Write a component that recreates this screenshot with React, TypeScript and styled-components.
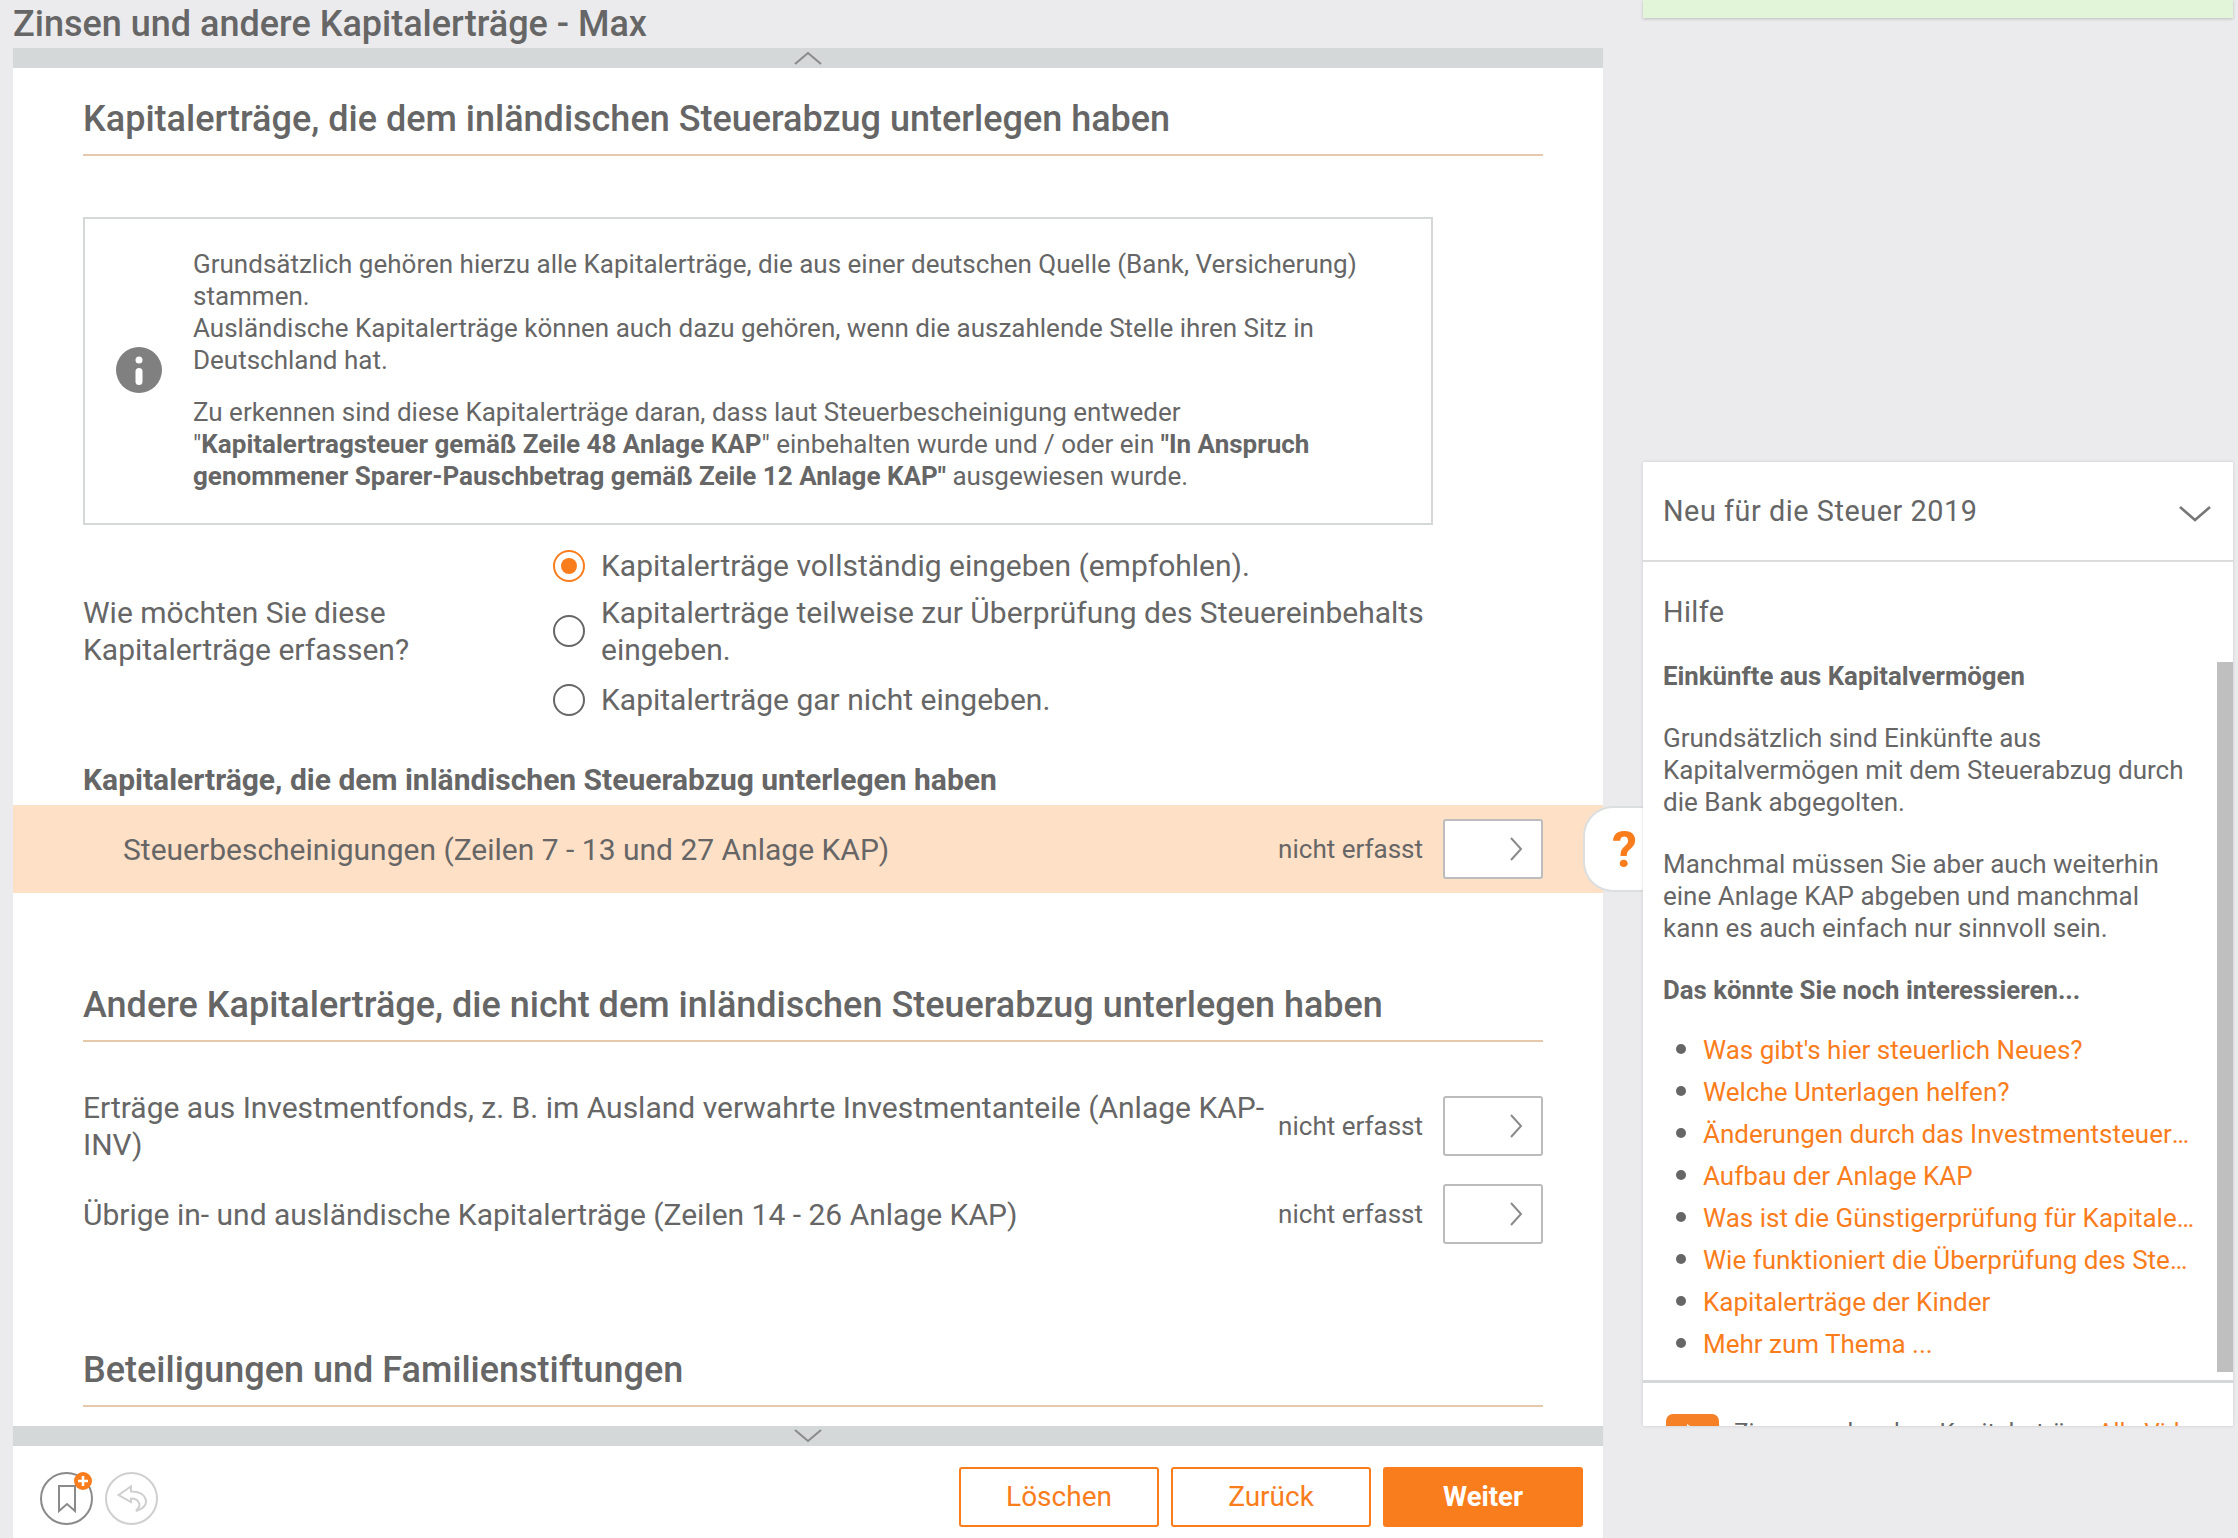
import React from 'react';
import styled, { createGlobalStyle } from 'styled-components';

const GlobalStyle = createGlobalStyle`
    html, body {
        margin: 0;
        padding: 0;
        height: 1538px;
        overflow: hidden;
        background: #ebebed;
        color: #666;
        font-family: Roboto, "Liberation Sans", sans-serif;
    }
    * {
        box-sizing: border-box;
    }
`

const Page = styled.div`
    display: flex;
    width: 2238px;
    height: 1538px;
    padding-left: 13px;
`

const MainColumn = styled.div`
    position: relative;
    width: 1590px;
    height: 1538px;
    display: flex;
    flex-direction: column;
`

const PageTitle = styled.h1`
    height: 48px;
    margin: 0;
    background: #ebebed;
    font-size: 36px;
    line-height: 48px;
    font-weight: 500;
    color: #666;
`

const ScrollBar = styled.div`
    height: 20px;
    flex: none;
    background: #d4d8d8;
    display: flex;
    align-items: center;
    justify-content: center;
`

const Content = styled.div`
    flex: 1;
    min-height: 0;
    overflow: hidden;
    background: #fff;
    padding: 0 60px 0 70px;
`

const SectionHead = styled.h2<{ $top: number }>`
    margin: ${p => p.$top}px 0 0;
    padding-bottom: 11px;
    font-size: 36px;
    line-height: 48px;
    font-weight: 500;
    color: #666;
    border-bottom: 2px solid #e6c8ac;
`

const InfoBox = styled.div`
    width: 1350px;
    height: 308px;
    margin-top: 61px;
    border: 2px solid #d4d8d8;
    padding: 29px 60px 0 108px;
    position: relative;
    font-size: 26px;
    line-height: 32px;
`

const InfoMark = styled.svg`
    position: absolute;
    left: 31px;
    top: 128px;
`

const InfoPara = styled.p`
    margin: 0 0 20px;
`

const QuestionRow = styled.div`
    display: grid;
    grid-template-columns: 470px 880px;
    align-items: center;
    margin-top: 22px;
    font-size: 30px;
    line-height: 37px;
`

const Question = styled.div`
    margin-bottom: 3px;
`

const RadioList = styled.div`
    display: flex;
    flex-direction: column;
    gap: 10px;
`

const RadioRow = styled.label`
    display: flex;
    align-items: center;
    gap: 16px;

    &:last-child {
        margin-top: 3px;
    }
`

const RadioDot = styled.span<{ $on?: boolean }>`
    width: 32px;
    height: 32px;
    flex: none;
    border-radius: 50%;
    background: #fff;
    border: 2px solid ${p => (p.$on ? '#f97d1c' : '#666')};
    display: flex;
    align-items: center;
    justify-content: center;

    &::after {
        content: "";
        display: ${p => (p.$on ? 'block' : 'none')};
        width: 16px;
        height: 16px;
        border-radius: 50%;
        background: #f97d1c;
    }
`

const GroupHead = styled.div`
    margin-top: 44px;
    font-size: 30px;
    line-height: 36px;
    font-weight: 700;
`

const HighlightRow = styled.div`
    display: flex;
    align-items: center;
    height: 88px;
    margin: 7px -60px 0 -70px;
    padding: 0 60px 0 110px;
    background: #fee0c6;
    font-size: 30px;
`

const EntryRow = styled.div<{ $top: number }>`
    display: flex;
    align-items: center;
    margin-top: ${p => p.$top}px;
    font-size: 30px;
    line-height: 37px;
`

const EntryLabel = styled.div`
    flex: 1;
    min-width: 0;
`

const EntryStatus = styled.span`
    font-size: 26px;
    margin: 0 20px 0 14px;
    white-space: nowrap;
`

const EntryButton = styled.button`
    width: 100px;
    height: 60px;
    flex: none;
    background: #fff;
    border: 2px solid #bcbcbc;
    border-radius: 3px;
    padding: 0 18px 0 0;
    display: flex;
    align-items: center;
    justify-content: flex-end;
`

const HelpTab = styled.div`
    position: absolute;
    left: 1570px;
    top: 806px;
    width: 60px;
    height: 86px;
    background: #fff;
    border: 2px solid #dcdfdf;
    border-right: none;
    border-radius: 30px 0 0 30px;
    display: flex;
    align-items: center;
    padding: 2px 0 0 27px;
    color: #f97d1c;
    font-size: 50px;
    font-weight: 700;
`

const Footer = styled.div`
    height: 92px;
    flex: none;
    background: #fff;
    display: flex;
    align-items: center;
    justify-content: space-between;
    padding: 9px 20px 0 27px;
`

const RoundGroup = styled.div`
    display: flex;
    gap: 12px;
    margin-top: 4px;
`

const RoundIcon = styled.div<{ $dim?: boolean }>`
    position: relative;
    width: 53px;
    height: 53px;
    border-radius: 50%;
    border: 2px solid ${p => (p.$dim ? '#cfcfcf' : '#8a8a8a')};
    display: flex;
    align-items: center;
    justify-content: center;
`

const PlusBadge = styled.span`
    position: absolute;
    right: -1px;
    top: -2px;
    width: 18px;
    height: 18px;
    border-radius: 50%;
    background: #f97d1c;
    display: flex;
    align-items: center;
    justify-content: center;
`

const ButtonGroup = styled.div`
    display: flex;
    gap: 12px;
`

const ActionButton = styled.button<{ $primary?: boolean }>`
    width: 200px;
    height: 60px;
    border-radius: 3px;
    border: 2px solid #f97d1c;
    background: ${p => (p.$primary ? '#f97d1c' : '#fff')};
    color: ${p => (p.$primary ? '#fff' : '#f97d1c')};
    font-family: Roboto, "Liberation Sans", sans-serif;
    font-size: ${p => (p.$primary ? 27.5 : 28)}px;
    font-weight: ${p => (p.$primary ? 700 : 400)};
`

const SideColumn = styled.div`
    width: 590px;
    margin-left: 40px;
    display: flex;
    flex-direction: column;
    height: 1426px;
`

const GreenBar = styled.div`
    height: 18px;
    flex: none;
    background: #e3f5d9;
    box-shadow: 0 1px 3px rgba(0, 0, 0, 0.2);
`

const SidePanel = styled.div`
    position: relative;
    margin-top: 444px;
    flex: 1;
    min-height: 0;
    overflow: hidden;
    background: #fff;
    box-shadow: 0 0 3px rgba(0, 0, 0, 0.15);
`

const NewsHead = styled.div`
    height: 100px;
    border-bottom: 2px solid #dcdcdc;
    display: flex;
    align-items: center;
    justify-content: space-between;
    padding: 0 22px 0 20px;
    font-size: 28.8px;
    letter-spacing: 0.55px;
`

const NewsArrow = styled.span`
    display: flex;
    margin-top: 5px;
`

const HelpBody = styled.div`
    height: 821px;
    overflow: hidden;
    padding: 0 38px 0 20px;
    border-bottom: 3px solid #d4d8d8;
    font-size: 26px;
    line-height: 32px;
`

const HelpTitle = styled.div`
    margin-top: 32px;
    font-size: 28.8px;
    line-height: 36px;
    letter-spacing: 0.4px;
`

const HelpHead = styled.div`
    margin-top: 30px;
    font-weight: 700;
    font-size: 25.8px;
`

const HelpPara = styled.p`
    margin: 30px 0 0;
`

const LinkList = styled.ul`
    margin: 21px 0 0;
    padding: 0 0 0 40px;
    list-style: disc;
`

const LinkItem = styled.li`
    height: 42px;
    line-height: 42px;
    color: #666;
    white-space: nowrap;

    &::marker {
        font-size: 32px;
    }
`

const LinkText = styled.a`
    display: block;
    overflow: hidden;
    text-overflow: ellipsis;
    color: #f97d1c;
`

const HelpScrollThumb = styled.div`
    position: absolute;
    right: 0;
    top: 200px;
    width: 16px;
    height: 710px;
    background: #bfbfbf;
`

const VideoRow = styled.div`
    display: flex;
    align-items: flex-start;
    gap: 15px;
    padding: 31px 0 0 23px;
    font-size: 24.3px;
    line-height: 32px;
    white-space: nowrap;
`

const VideoThumb = styled.div`
    width: 53px;
    height: 36px;
    flex: none;
    border-radius: 7px;
    background: #f58026;
    display: flex;
    align-items: center;
    justify-content: center;
`

const VideoTitle = styled.span`
    margin-top: 2px;
`

const VideoLink = styled.span`
    color: #f97d1c;
`

const Chevron = ({ d, w, h, color, weight = 2 }: { d: string; w: number; h: number; color: string; weight?: number }) => (
    <svg width={w} height={h} viewBox={`0 0 ${w} ${h}`} fill="none" stroke={color} strokeWidth={weight}>
        <path d={d} />
    </svg>
);

const links = [
    "Was gibt's hier steuerlich Neues?",
    "Welche Unterlagen helfen?",
    "Änderungen durch das Investmentsteuerreformgesetz",
    "Aufbau der Anlage KAP",
    "Was ist die Günstigerprüfung für Kapitalerträge?",
    "Wie funktioniert die Überprüfung des Steuereinbehalts?",
    "Kapitalerträge der Kinder",
    "Mehr zum Thema ...",
];

const EntryArrow = () => (
    <EntryButton>
        <Chevron d="M1 1 L11 12 L1 23" w={13} h={24} color="#8a8a8a" />
    </EntryButton>
);

export default function App() {
    return (
        <Page>
            <GlobalStyle />
            <MainColumn>
                <PageTitle>Zinsen und andere Kapitalerträge - Max</PageTitle>
                <ScrollBar>
                    <Chevron d="M1 13 L14 2 L27 13" w={28} h={14} color="#8a8a8a" />
                </ScrollBar>
                <Content>
                    <SectionHead $top={27}>Kapitalerträge, die dem inländischen Steuerabzug unterlegen haben</SectionHead>
                    <InfoBox>
                        <InfoMark width="46" height="46" viewBox="0 0 46 46">
                            <circle cx="23" cy="23" r="23" fill="#808080" />
                            <circle cx="23" cy="13" r="3.5" fill="#fff" />
                            <rect x="19.5" y="21" width="7" height="17" rx="3.5" fill="#fff" />
                        </InfoMark>
                        <InfoPara>
                            Grundsätzlich gehören hierzu alle Kapitalerträge, die aus einer deutschen Quelle (Bank, Versicherung) stammen.<br />
                            Ausländische Kapitalerträge können auch dazu gehören, wenn die auszahlende Stelle ihren Sitz in Deutschland hat.
                        </InfoPara>
                        <InfoPara>
                            Zu erkennen sind diese Kapitalerträge daran, dass laut Steuerbescheinigung entweder<br />
                            "<b>Kapitalertragsteuer gemäß Zeile 48 Anlage KAP</b>" einbehalten wurde und / oder ein <b>"In Anspruch genommener Sparer-Pauschbetrag gemäß Zeile 12 Anlage KAP"</b> ausgewiesen wurde.
                        </InfoPara>
                    </InfoBox>
                    <QuestionRow>
                        <Question>Wie möchten Sie diese<br />Kapitalerträge erfassen?</Question>
                        <RadioList>
                            <RadioRow><RadioDot $on />Kapitalerträge vollständig eingeben (empfohlen).</RadioRow>
                            <RadioRow><RadioDot />Kapitalerträge teilweise zur Überprüfung des Steuereinbehalts eingeben.</RadioRow>
                            <RadioRow><RadioDot />Kapitalerträge gar nicht eingeben.</RadioRow>
                        </RadioList>
                    </QuestionRow>
                    <GroupHead>Kapitalerträge, die dem inländischen Steuerabzug unterlegen haben</GroupHead>
                    <HighlightRow>
                        <EntryLabel>Steuerbescheinigungen (Zeilen 7 - 13 und 27 Anlage KAP)</EntryLabel>
                        <EntryStatus>nicht erfasst</EntryStatus>
                        <EntryArrow />
                    </HighlightRow>
                    <SectionHead $top={88}>Andere Kapitalerträge, die nicht dem inländischen Steuerabzug unterlegen haben</SectionHead>
                    <EntryRow $top={47}>
                        <EntryLabel>Erträge aus Investmentfonds, z. B. im Ausland verwahrte Investmentanteile (Anlage KAP-INV)</EntryLabel>
                        <EntryStatus>nicht erfasst</EntryStatus>
                        <EntryArrow />
                    </EntryRow>
                    <EntryRow $top={21}>
                        <EntryLabel>Übrige in- und ausländische Kapitalerträge (Zeilen 14 - 26 Anlage KAP)</EntryLabel>
                        <EntryStatus>nicht erfasst</EntryStatus>
                        <EntryArrow />
                    </EntryRow>
                    <SectionHead $top={102}>Beteiligungen und Familienstiftungen</SectionHead>
                </Content>
                <ScrollBar>
                    <Chevron d="M1 1 L14 12 L27 1" w={28} h={14} color="#8a8a8a" />
                </ScrollBar>
                <Footer>
                    <RoundGroup>
                        <RoundIcon>
                            <svg width="18" height="28" viewBox="0 0 18 28" fill="none" stroke="#8a8a8a" strokeWidth="2">
                                <path d="M1 1 H17 V26 L9 19 L1 26 Z" />
                            </svg>
                            <PlusBadge>
                                <svg width="10" height="10" viewBox="0 0 10 10" stroke="#fff" strokeWidth="2.6">
                                    <path d="M5 0 V10 M0 5 H10" />
                                </svg>
                            </PlusBadge>
                        </RoundIcon>
                        <RoundIcon $dim>
                            <svg width="30" height="30" viewBox="0 0 30 30" fill="none" stroke="#cfcfcf" strokeWidth="2">
                                <path d="M1.5 11 L14 2.5 V7.5 C24 7.5 29 12 29 18 C29 22 25 25 19 27 C22 24 23 21 22 19 C21 16 18 14.5 14 14.5 V18 Z" />
                            </svg>
                        </RoundIcon>
                    </RoundGroup>
                    <ButtonGroup>
                        <ActionButton>Löschen</ActionButton>
                        <ActionButton>Zurück</ActionButton>
                        <ActionButton $primary>Weiter</ActionButton>
                    </ButtonGroup>
                </Footer>
                <HelpTab>?</HelpTab>
            </MainColumn>
            <SideColumn>
                <GreenBar />
                <SidePanel>
                    <NewsHead>
                        Neu für die Steuer 2019
                        <NewsArrow>
                            <Chevron d="M1 1 L16 14 L31 1" w={32} h={16} color="#777" weight={2.6} />
                        </NewsArrow>
                    </NewsHead>
                    <HelpBody>
                        <HelpTitle>Hilfe</HelpTitle>
                        <HelpHead>Einkünfte aus Kapitalvermögen</HelpHead>
                        <HelpPara>Grundsätzlich sind Einkünfte aus Kapitalvermögen mit dem Steuerabzug durch die Bank abgegolten.</HelpPara>
                        <HelpPara>Manchmal müssen Sie aber auch weiterhin eine Anlage KAP abgeben und manchmal kann es auch einfach nur sinnvoll sein.</HelpPara>
                        <HelpHead>Das könnte Sie noch interessieren...</HelpHead>
                        <LinkList>
                            {links.map(link => (
                                <LinkItem key={link}><LinkText>{link}</LinkText></LinkItem>
                            ))}
                        </LinkList>
                    </HelpBody>
                    <HelpScrollThumb />
                    <VideoRow>
                        <VideoThumb>
                            <svg width="14" height="18" viewBox="0 0 14 18"><path d="M1 1 L13 9 L1 17 Z" fill="#fff" /></svg>
                        </VideoThumb>
                        <VideoTitle>Zinsen und andere Kapitalerträge <VideoLink>Alle Videos</VideoLink></VideoTitle>
                    </VideoRow>
                </SidePanel>
            </SideColumn>
        </Page>
    );
}
